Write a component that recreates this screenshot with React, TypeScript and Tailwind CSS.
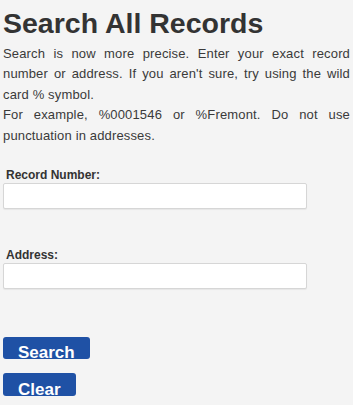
export default function App() {
  return (
    <div className="min-h-[405px] bg-[#f4f4f4] px-[3px] pt-[7px] font-['Liberation_Sans',Arial,sans-serif] text-[#333]">
      <h1 className="text-[28.5px] font-bold leading-[32px] text-[#333]">
        Search All Records
      </h1>
      <p className="mt-[4.5px] text-justify text-[13px] leading-[20.5px] tracking-[0.15px] text-[#3a3a3a]">
        Search is now more precise. Enter your exact record number or address.
        If you aren't sure, try using the wild card % symbol.
        <br />
        For example, %0001546 or %Fremont. Do not use punctuation in
        addresses.
      </p>

      <form className="flex flex-col" onSubmit={(e) => e.preventDefault()}>
        <label className="mt-[22px] pl-[3px] text-[12px] font-bold leading-[14px] text-[#333]">
          Record Number:
        </label>
        <input
          type="text"
          className="mt-[1px] h-[26px] w-[304px] rounded-[2px] border border-[#d6d6d6] bg-white shadow-[0_1px_1px_rgba(0,0,0,0.06)] outline-none"
        />

        <label className="mt-[39px] pl-[3px] text-[12px] font-bold leading-[14px] text-[#333]">
          Address:
        </label>
        <input
          type="text"
          className="mt-[1px] h-[26px] w-[304px] rounded-[2px] border border-[#d6d6d6] bg-white shadow-[0_1px_1px_rgba(0,0,0,0.06)] outline-none"
        />

        <div className="mt-[48px] flex flex-col items-start gap-[14px]">
          <button
            type="submit"
            className="flex h-[22px] items-start rounded-[3px] bg-[#1f51a5] px-[15px] pt-[7px] text-[17px] font-bold leading-[17px] text-white"
          >
            Search
          </button>
          <button
            type="reset"
            className="flex h-[23px] items-start rounded-[3px] bg-[#1f51a5] px-[15px] pt-[8px] text-[17px] font-bold leading-[17px] text-white"
          >
            Clear
          </button>
        </div>
      </form>
    </div>
  );
}
